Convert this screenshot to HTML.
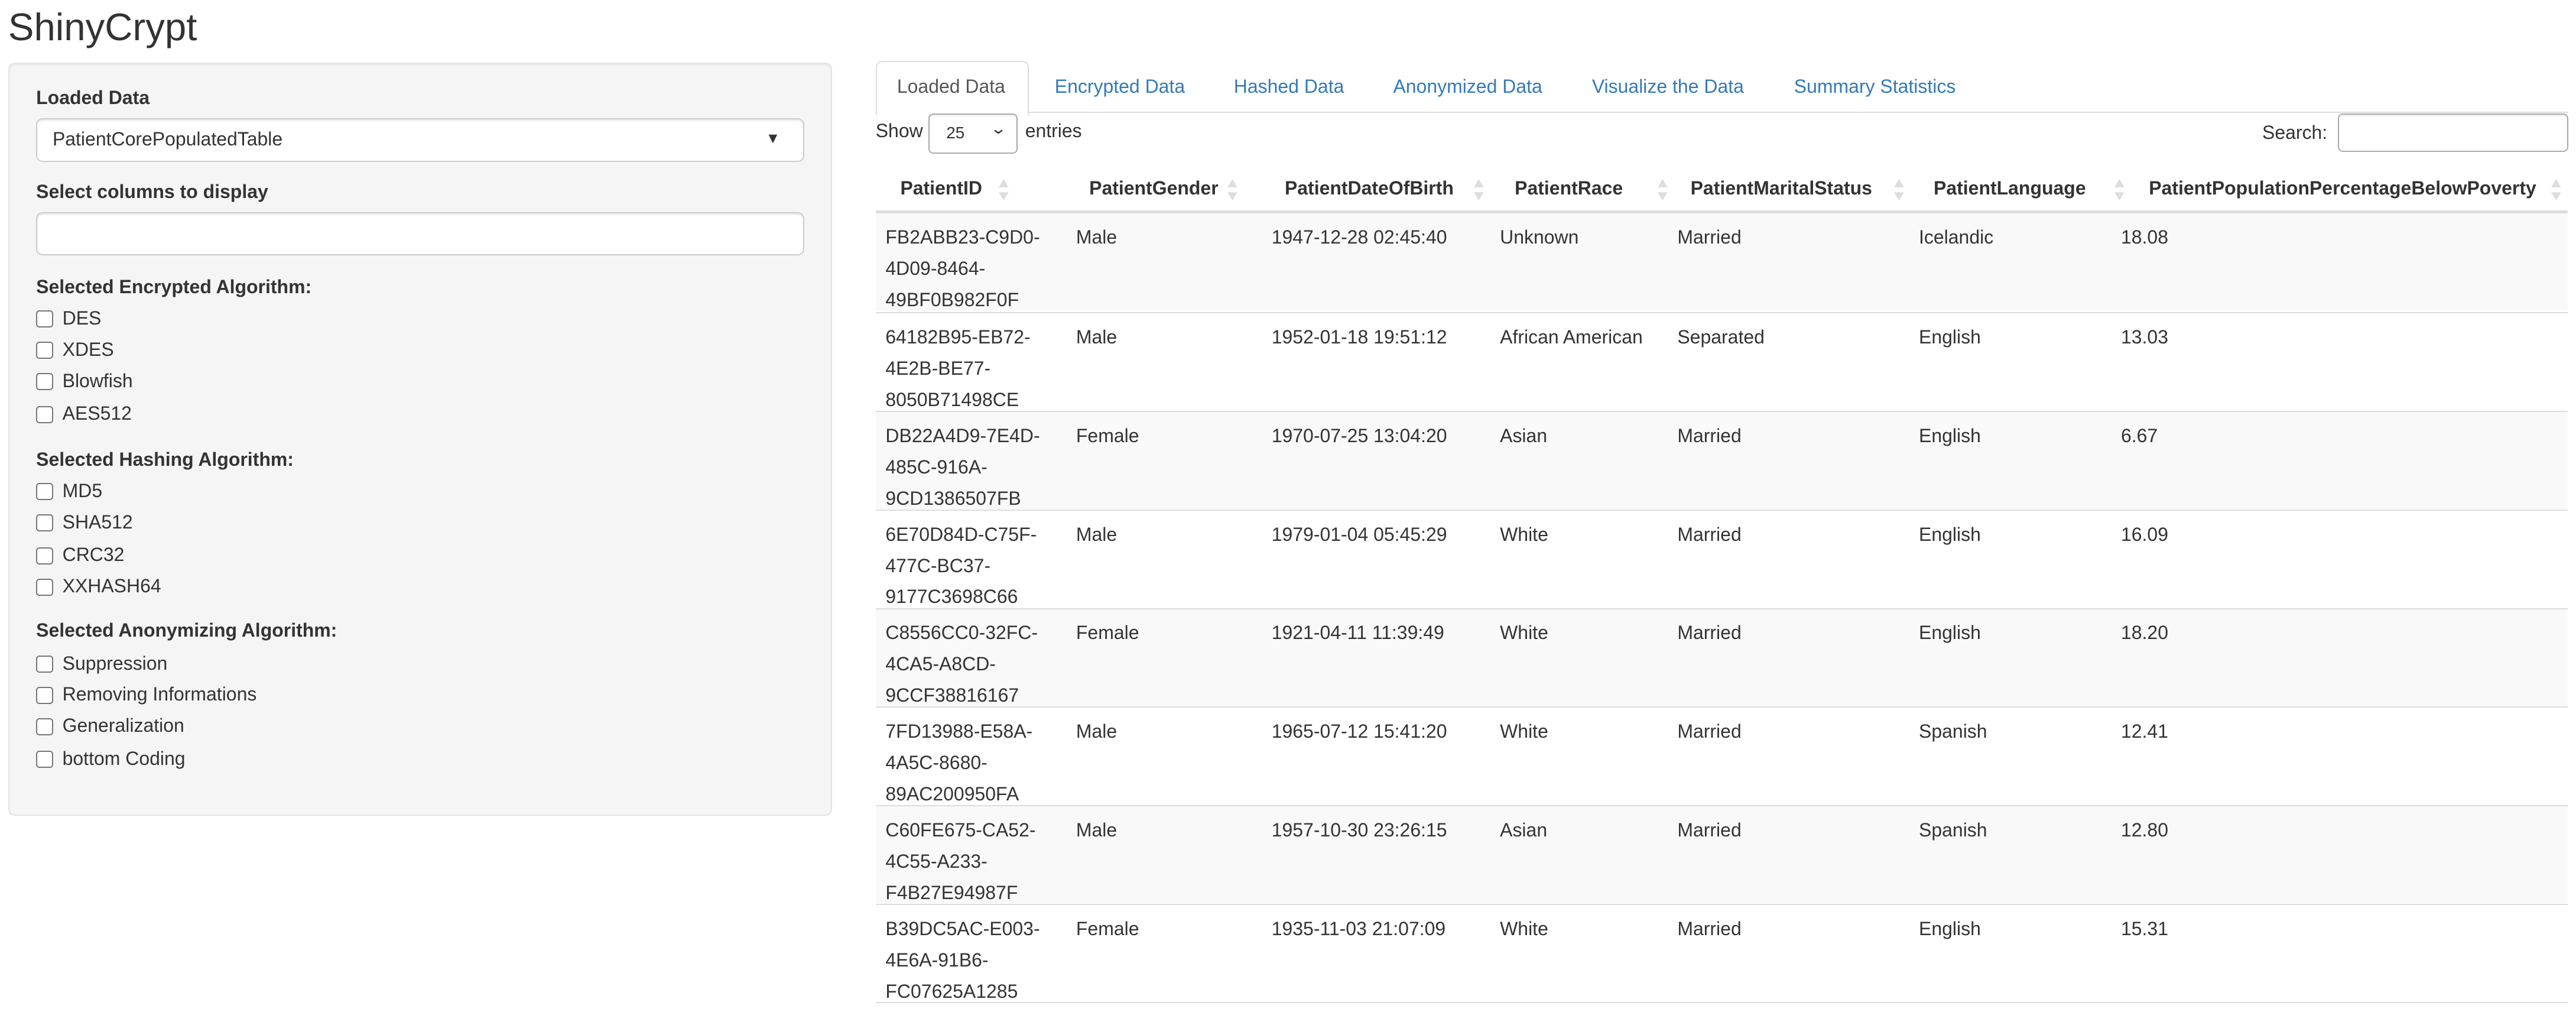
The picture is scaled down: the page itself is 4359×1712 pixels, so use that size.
<!DOCTYPE html>
<html><head><meta charset="utf-8"><style>
html,body{margin:0;padding:0;background:#fff;overflow:hidden;}
#w{zoom:2.78;width:1568px;height:616px;position:relative;font-family:"Liberation Sans",Arial,sans-serif;font-size:11.5px;color:#333;}
.a{position:absolute;white-space:nowrap;}
.lbl{font-weight:bold;}
.cb{position:absolute;width:9px;height:9px;border:1px solid #767676;border-radius:2px;background:#fff;}
.box{position:absolute;background:#fff;border:1px solid #ccc;border-radius:4px;box-shadow:inset 0 1px 1px rgba(0,0,0,.075);}
.tab{position:absolute;top:46px;color:#337ab7;font-size:11.5px;}
.th{position:absolute;top:108px;font-weight:bold;}
.sort{position:absolute;top:109px;width:6px;height:13px;}
.row{position:absolute;left:533px;width:1030px;height:59px;border-top:1px solid #ddd;}
.c{position:absolute;top:5px;line-height:19px;}
</style></head><body><div id="w">
<div class="a" style="left:5px;top:3px;font-size:23.5px;color:#333;">ShinyCrypt</div>
<div class="a" style="left:5px;top:38px;width:500px;height:457px;background:#f5f5f5;border:1px solid #e3e3e3;border-radius:4px;box-shadow:inset 0 1px 1px rgba(0,0,0,.05);"></div>
<div class="a lbl" style="left:22px;top:53px;">Loaded Data</div>
<div class="box" style="left:22px;top:72px;width:466px;height:25px;"></div>
<div class="a" style="left:32px;top:78px;">PatientCorePopulatedTable</div>
<div class="a" style="left:466px;top:79px;font-size:9px;">&#9660;</div>
<div class="a lbl" style="left:22px;top:110px;">Select columns to display</div>
<div class="box" style="left:22px;top:129px;width:466px;height:25px;"></div>
<div class="a lbl" style="left:22px;top:168px;">Selected Encrypted Algorithm:</div>
<div class="cb" style="left:22px;top:189px"></div><div class="a" style="left:38px;top:187px;">DES</div>
<div class="cb" style="left:22px;top:208px"></div><div class="a" style="left:38px;top:206px;">XDES</div>
<div class="cb" style="left:22px;top:227px"></div><div class="a" style="left:38px;top:225px;">Blowfish</div>
<div class="cb" style="left:22px;top:247px"></div><div class="a" style="left:38px;top:245px;">AES512</div>
<div class="a lbl" style="left:22px;top:273px;">Selected Hashing Algorithm:</div>
<div class="cb" style="left:22px;top:294px"></div><div class="a" style="left:38px;top:292px;">MD5</div>
<div class="cb" style="left:22px;top:313px"></div><div class="a" style="left:38px;top:311px;">SHA512</div>
<div class="cb" style="left:22px;top:333px"></div><div class="a" style="left:38px;top:331px;">CRC32</div>
<div class="cb" style="left:22px;top:352px"></div><div class="a" style="left:38px;top:350px;">XXHASH64</div>
<div class="a lbl" style="left:22px;top:377px;">Selected Anonymizing Algorithm:</div>
<div class="cb" style="left:22px;top:399px"></div><div class="a" style="left:38px;top:397px;">Suppression</div>
<div class="cb" style="left:22px;top:418px"></div><div class="a" style="left:38px;top:416px;">Removing Informations</div>
<div class="cb" style="left:22px;top:437px"></div><div class="a" style="left:38px;top:435px;">Generalization</div>
<div class="cb" style="left:22px;top:457px"></div><div class="a" style="left:38px;top:455px;">bottom Coding</div>

<div class="a" style="left:533px;top:68px;width:1030px;border-top:1px solid #ddd;"></div>
<div class="a" style="left:533px;top:37px;width:92px;height:32px;border:1px solid #ddd;border-bottom:1px solid #fff;border-radius:4px 4px 0 0;background:#fff;"></div>
<div class="tab" style="left:546px;color:#555;">Loaded Data</div>
<div class="tab" style="left:642px;">Encrypted Data</div>
<div class="tab" style="left:751px;">Hashed Data</div>
<div class="tab" style="left:848px;">Anonymized Data</div>
<div class="tab" style="left:969px;">Visualize the Data</div>
<div class="tab" style="left:1092px;">Summary Statistics</div>

<div class="a" style="left:533px;top:73px;">Show</div>
<div class="box" style="left:565px;top:69px;width:53px;height:23px;border-color:#aaa;border-radius:3px;"></div>
<div class="a" style="left:576px;top:75px;font-size:10px;">25</div>
<div class="a" style="left:604px;top:73px;font-size:9px;transform:scaleX(1.4);">&#8964;</div>
<div class="a" style="left:624px;top:73px;">entries</div>
<div class="a" style="left:1377px;top:74px;">Search:</div>
<div class="box" style="left:1423px;top:69px;width:139px;height:22px;border-color:#aaa;border-radius:3px;"></div>

<div class="th" style="left:548px">PatientID</div>
<div class="th" style="left:663px">PatientGender</div>
<div class="th" style="left:782px">PatientDateOfBirth</div>
<div class="th" style="left:922px">PatientRace</div>
<div class="th" style="left:1029px">PatientMaritalStatus</div>
<div class="th" style="left:1177px">PatientLanguage</div>
<div class="th" style="left:1308px">PatientPopulationPercentageBelowPoverty</div>
<svg class="sort" style="left:608px" viewBox="0 0 6 13"><path d="M3 0L6 5H0Z M3 13L6 8H0Z" fill="#ddd"/></svg>
<svg class="sort" style="left:747px" viewBox="0 0 6 13"><path d="M3 0L6 5H0Z M3 13L6 8H0Z" fill="#ddd"/></svg>
<svg class="sort" style="left:897px" viewBox="0 0 6 13"><path d="M3 0L6 5H0Z M3 13L6 8H0Z" fill="#ddd"/></svg>
<svg class="sort" style="left:1009px" viewBox="0 0 6 13"><path d="M3 0L6 5H0Z M3 13L6 8H0Z" fill="#ddd"/></svg>
<svg class="sort" style="left:1153px" viewBox="0 0 6 13"><path d="M3 0L6 5H0Z M3 13L6 8H0Z" fill="#ddd"/></svg>
<svg class="sort" style="left:1287px" viewBox="0 0 6 13"><path d="M3 0L6 5H0Z M3 13L6 8H0Z" fill="#ddd"/></svg>
<svg class="sort" style="left:1553px" viewBox="0 0 6 13"><path d="M3 0L6 5H0Z M3 13L6 8H0Z" fill="#ddd"/></svg>
<div class="a" style="left:533px;top:128px;width:1030px;border-top:2px solid #ddd;"></div>

<div class="row" style="top:130px;background:#f9f9f9;border-top:none;"><div class="c" style="left:6px">FB2ABB23-C9D0-<br>4D09-8464-<br>49BF0B982F0F</div><div class="c" style="left:122px">Male</div><div class="c" style="left:241px">1947-12-28 02:45:40</div><div class="c" style="left:380px">Unknown</div><div class="c" style="left:488px">Married</div><div class="c" style="left:635px">Icelandic</div><div class="c" style="left:758px">18.08</div></div>
<div class="row" style="top:190px;"><div class="c" style="left:6px">64182B95-EB72-<br>4E2B-BE77-<br>8050B71498CE</div><div class="c" style="left:122px">Male</div><div class="c" style="left:241px">1952-01-18 19:51:12</div><div class="c" style="left:380px">African American</div><div class="c" style="left:488px">Separated</div><div class="c" style="left:635px">English</div><div class="c" style="left:758px">13.03</div></div>
<div class="row" style="top:250px;background:#f9f9f9;"><div class="c" style="left:6px">DB22A4D9-7E4D-<br>485C-916A-<br>9CD1386507FB</div><div class="c" style="left:122px">Female</div><div class="c" style="left:241px">1970-07-25 13:04:20</div><div class="c" style="left:380px">Asian</div><div class="c" style="left:488px">Married</div><div class="c" style="left:635px">English</div><div class="c" style="left:758px">6.67</div></div>
<div class="row" style="top:310px;"><div class="c" style="left:6px">6E70D84D-C75F-<br>477C-BC37-<br>9177C3698C66</div><div class="c" style="left:122px">Male</div><div class="c" style="left:241px">1979-01-04 05:45:29</div><div class="c" style="left:380px">White</div><div class="c" style="left:488px">Married</div><div class="c" style="left:635px">English</div><div class="c" style="left:758px">16.09</div></div>
<div class="row" style="top:370px;background:#f9f9f9;"><div class="c" style="left:6px">C8556CC0-32FC-<br>4CA5-A8CD-<br>9CCF38816167</div><div class="c" style="left:122px">Female</div><div class="c" style="left:241px">1921-04-11 11:39:49</div><div class="c" style="left:380px">White</div><div class="c" style="left:488px">Married</div><div class="c" style="left:635px">English</div><div class="c" style="left:758px">18.20</div></div>
<div class="row" style="top:430px;"><div class="c" style="left:6px">7FD13988-E58A-<br>4A5C-8680-<br>89AC200950FA</div><div class="c" style="left:122px">Male</div><div class="c" style="left:241px">1965-07-12 15:41:20</div><div class="c" style="left:380px">White</div><div class="c" style="left:488px">Married</div><div class="c" style="left:635px">Spanish</div><div class="c" style="left:758px">12.41</div></div>
<div class="row" style="top:490px;background:#f9f9f9;"><div class="c" style="left:6px">C60FE675-CA52-<br>4C55-A233-<br>F4B27E94987F</div><div class="c" style="left:122px">Male</div><div class="c" style="left:241px">1957-10-30 23:26:15</div><div class="c" style="left:380px">Asian</div><div class="c" style="left:488px">Married</div><div class="c" style="left:635px">Spanish</div><div class="c" style="left:758px">12.80</div></div>
<div class="row" style="top:550px;border-bottom:1px solid #ddd;"><div class="c" style="left:6px">B39DC5AC-E003-<br>4E6A-91B6-<br>FC07625A1285</div><div class="c" style="left:122px">Female</div><div class="c" style="left:241px">1935-11-03 21:07:09</div><div class="c" style="left:380px">White</div><div class="c" style="left:488px">Married</div><div class="c" style="left:635px">English</div><div class="c" style="left:758px">15.31</div></div>
</div></body></html>
